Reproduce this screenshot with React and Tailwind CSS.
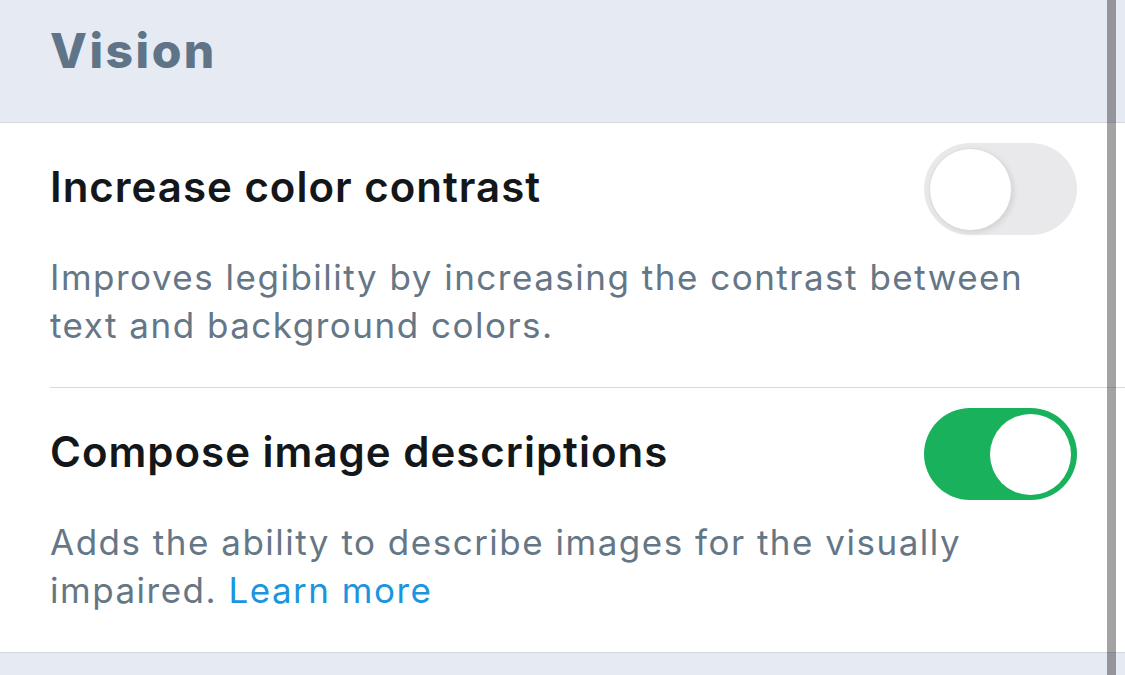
import { useState } from 'react'

const FONT = { fontFamily: 'Inter, "Noto Sans", sans-serif' }

function Toggle({ on, onChange }) {
  return (
    <button
      type="button"
      onClick={() => onChange(!on)}
      className={`-mt-[20px] -mb-[24px] flex h-[92px] w-[153px] shrink-0 items-center rounded-full p-[6px] ${
        on ? 'justify-end bg-[#19b15c]' : 'justify-start bg-[#e9e9eb]'
      }`}
    >
      <span
        className={`block h-[81px] w-[81px] rounded-full bg-white ${
          on ? '' : 'shadow-[2px_2px_6px_rgba(0,0,0,0.12)] ring-1 ring-[#dcdcde]'
        }`}
      />
    </button>
  )
}

function SettingRow({ title, children, on, onChange, last }) {
  return (
    <div className={`pl-[50px] bg-white ${last ? 'border-b border-[#d4d8de]' : ''}`}>
      <div className={`pt-[40px] pb-[38px] pr-[48px] ${last ? '' : 'border-b border-[#d9d9dc]'}`}>
        <div className="flex items-center justify-between">
          <h3 className="text-[42px] leading-[48px] font-semibold text-[#14171a] tracking-[1px]">{title}</h3>
          <Toggle on={on} onChange={onChange} />
        </div>
        <p className="mt-[42px] text-[35px] leading-[48px] text-[#657786] tracking-[1.5px]">{children}</p>
      </div>
    </div>
  )
}

export default function App() {
  const [contrast, setContrast] = useState(false)
  const [describe, setDescribe] = useState(true)

  return (
    <div className="relative min-h-screen w-full overflow-hidden bg-[#e6eaf2]" style={FONT}>
      {/* Section header */}
      <div className="h-[123px] border-b border-[#d4d8de] pl-[50px] pt-[27px]">
        <h2 className="text-[48px] leading-[48px] font-extrabold text-[#5f7487] tracking-[2.5px]">Vision</h2>
      </div>

      <SettingRow title="Increase color contrast" on={contrast} onChange={setContrast}>
        Improves legibility by increasing the contrast between
        <br />
        text and background colors.
      </SettingRow>

      <SettingRow title="Compose image descriptions" on={describe} onChange={setDescribe} last>
        Adds the ability to describe images for the visually
        <br />
        impaired. <a href="#" className="text-[#1b95e0]">Learn more</a>
      </SettingRow>

      {/* Scrollbar overlay */}
      <div className="pointer-events-none absolute top-0 bottom-0 right-[9px] w-[9px] bg-black/[0.36]" />
    </div>
  )
}
